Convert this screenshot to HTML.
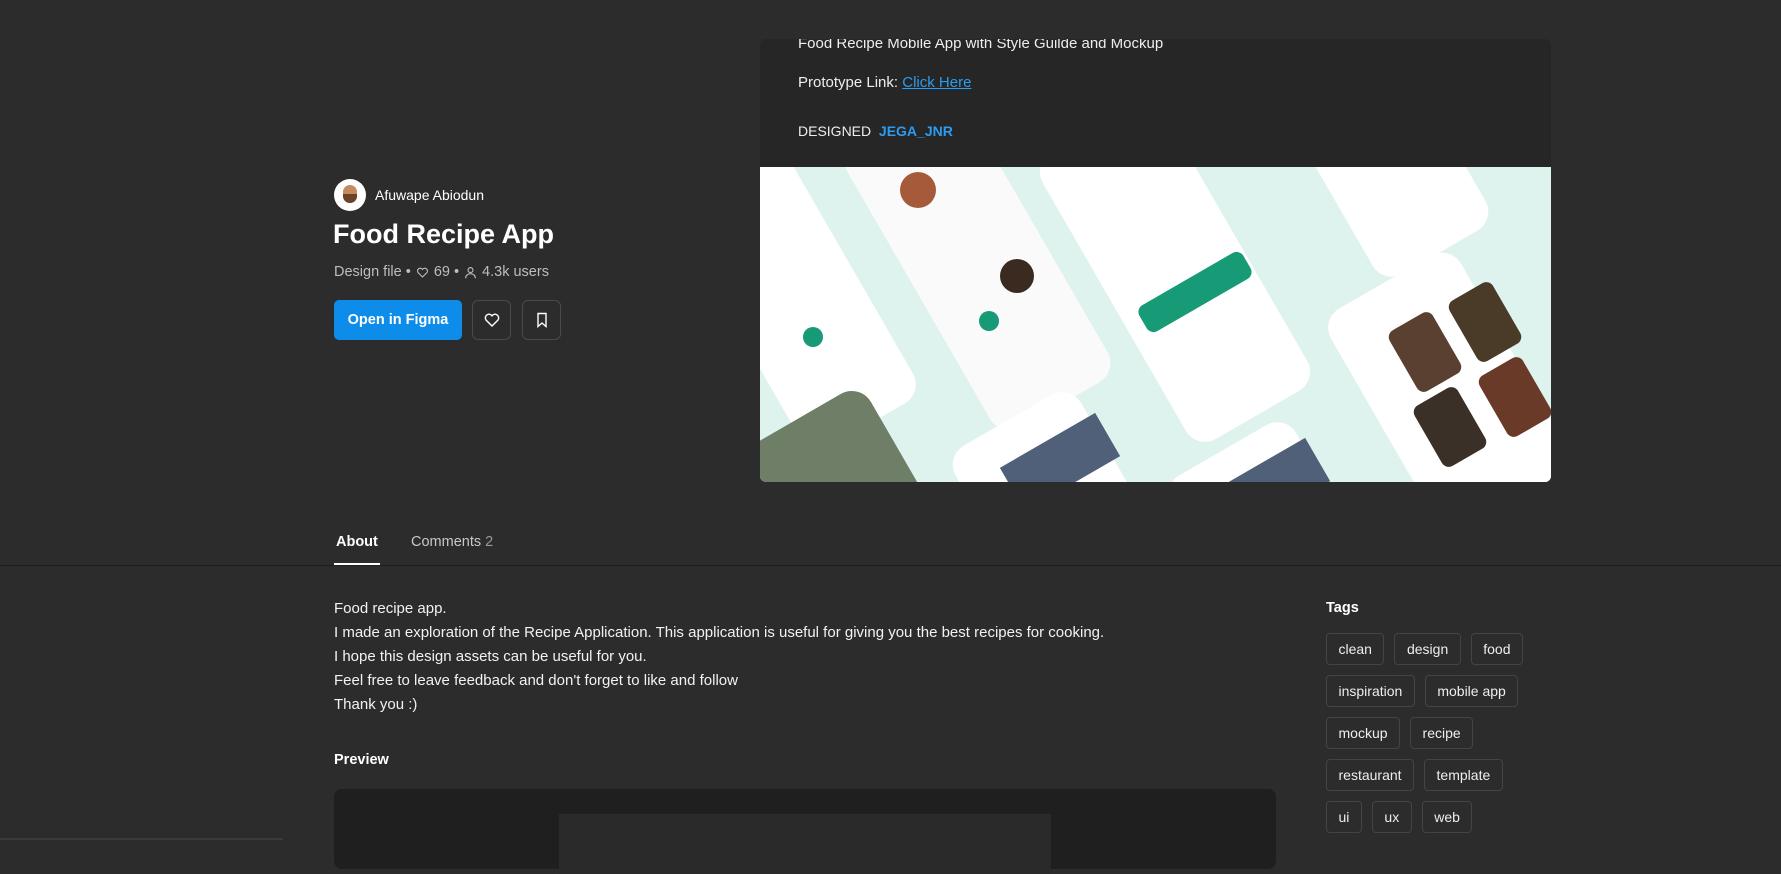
<!DOCTYPE html>
<html><head><meta charset="utf-8"><style>
*{margin:0;padding:0;box-sizing:border-box}
body{width:1781px;height:840px;background:#2c2c2c;font-family:"Liberation Sans",sans-serif;color:#fff;overflow:hidden;position:relative}
.a{position:absolute}
.btn{position:absolute;border:1px solid #4a4a4a;border-radius:6px;width:39px;height:40px;display:flex;align-items:center;justify-content:center}
.tag{display:inline-block;height:32px;line-height:30px;padding:0 11.5px;border:1px solid #444;border-radius:4px;font-size:14px;margin-right:10px;color:#eee}
.row{position:absolute;left:1326px;white-space:nowrap}
.body p{font-size:15px;line-height:24px;color:#f2f2f2}
.phone{position:absolute;background:#fff;border-radius:22px;transform:rotate(-30deg)}
</style></head><body>
<div class="a" style="left:334px;top:179px;width:32px;height:32px;border-radius:50%;background:#fff;overflow:hidden">
<div class="a" style="left:9px;top:6px;width:14px;height:18px;border-radius:7px;background:#c58a5e"></div>
<div class="a" style="left:9px;top:15px;width:14px;height:9px;border-radius:0 0 7px 7px;background:#6b4328"></div></div>
<div class="a" style="left:375px;top:187px;font-size:14px;color:#fff">Afuwape Abiodun</div>
<div class="a" style="left:333px;top:219px;font-size:27px;font-weight:bold">Food Recipe App</div>
<div class="a" style="left:334px;top:264px;font-size:14.5px;color:#bdbdbd;display:flex;align-items:center;gap:5px">Design file •
<svg width="13" height="13" viewBox="0 0 16 16"><path d="M8 13.5 2.5 8A3 3 0 0 1 8 4.2 3 3 0 0 1 13.5 8Z" fill="none" stroke="#bbb" stroke-width="1.4"/></svg> 69 •
<svg width="13" height="13" viewBox="0 0 16 16"><circle cx="8" cy="5" r="3" fill="none" stroke="#bbb" stroke-width="1.4"/><path d="M2 15c0-3.5 2.7-5.5 6-5.5s6 2 6 5.5" fill="none" stroke="#bbb" stroke-width="1.4"/></svg> 4.3k users</div>
<div class="a" style="left:334px;top:300px;width:128px;height:40px;background:#0d8ce9;border-radius:5px;font-size:14.5px;font-weight:bold;display:flex;align-items:center;justify-content:center">Open in Figma</div>
<div class="btn" style="left:472px;top:300px"><svg width="16" height="16" viewBox="0 0 16 16"><path d="M8 14 2 8A3.3 3.3 0 0 1 8 3.8 3.3 3.3 0 0 1 14 8Z" fill="none" stroke="#fff" stroke-width="1.4"/></svg></div>
<div class="btn" style="left:522px;top:300px"><svg width="14" height="16" viewBox="0 0 14 16"><path d="M3 1.5h8v13L7 11l-4 3.5Z" fill="none" stroke="#fff" stroke-width="1.4"/></svg></div>

<div class="a" style="left:760px;top:39px;width:791px;height:443px;border-radius:6px;overflow:hidden;background:#262626">
<div class="a" style="left:38px;top:-4px;font-size:15px;color:#eee">Food Recipe Mobile App with Style Guilde and Mockup</div>
<div class="a" style="left:38px;top:35px;font-size:15px;color:#eee">Prototype Link: <span style="color:#2c9cf0;text-decoration:underline">Click Here</span></div>
<div class="a" style="left:38px;top:84px;font-size:14px;color:#eee">DESIGNED &nbsp;<span style="color:#2c9cf0;font-weight:bold">JEGA_JNR</span></div>
<div class="a" style="left:0;top:128px;width:791px;height:315px;background:#dff3ee;overflow:hidden">
<div class="phone" style="left:-40px;top:-50px;width:130px;height:330px"></div>
<div class="phone" style="left:150px;top:-70px;width:135px;height:330px;background:#fafafa"></div>
<div class="phone" style="left:345px;top:-60px;width:140px;height:330px"></div>
<div class="phone" style="left:560px;top:-120px;width:130px;height:220px"></div>
<div class="phone" style="left:625px;top:95px;width:150px;height:300px"></div>
<div class="phone" style="left:10px;top:240px;width:150px;height:200px;background:#6f7f67"></div>
<div class="phone" style="left:225px;top:240px;width:145px;height:200px"></div>
<div class="phone" style="left:440px;top:270px;width:145px;height:200px"></div>
<div class="a" style="left:375px;top:110px;width:120px;height:30px;background:#179b77;border-radius:8px;transform:rotate(-30deg)"></div>
<div class="a" style="left:140px;top:5px;width:36px;height:36px;border-radius:50%;background:#a55a3a"></div>
<div class="a" style="left:240px;top:92px;width:34px;height:34px;border-radius:50%;background:#3a2a20"></div>
<div class="a" style="left:43px;top:160px;width:20px;height:20px;border-radius:50%;background:#179b77"></div>
<div class="a" style="left:219px;top:144px;width:20px;height:20px;border-radius:50%;background:#179b77"></div>
<div class="a" style="left:640px;top:150px;width:50px;height:70px;border-radius:8px;background:#5a4030;transform:rotate(-30deg)"></div>
<div class="a" style="left:700px;top:120px;width:50px;height:70px;border-radius:8px;background:#4a3a28;transform:rotate(-30deg)"></div>
<div class="a" style="left:665px;top:225px;width:50px;height:70px;border-radius:8px;background:#3a3028;transform:rotate(-30deg)"></div>
<div class="a" style="left:730px;top:195px;width:50px;height:70px;border-radius:8px;background:#6a3a28;transform:rotate(-30deg)"></div>
<div class="a" style="left:245px;top:270px;width:110px;height:50px;background:#4f6078;transform:rotate(-30deg)"></div>
<div class="a" style="left:455px;top:295px;width:110px;height:50px;background:#4f6078;transform:rotate(-30deg)"></div>
</div></div>

<div class="a" style="left:336px;top:534px;font-size:14.5px;font-weight:bold">About</div>
<div class="a" style="left:334px;top:563px;width:46px;height:2px;background:#fff"></div>
<div class="a" style="left:411px;top:534px;font-size:14.5px;color:#c8c8c8">Comments <span style="color:#999">2</span></div>
<div class="a" style="left:0;top:565px;width:1781px;height:1px;background:#1e1e1e"></div>

<div class="a body" style="left:334px;top:597px">
<p>Food recipe app.</p>
<p>I made an exploration of the Recipe Application. This application is useful for giving you the best recipes for cooking.</p>
<p>I hope this design assets can be useful for you.</p>
<p>Feel free to leave feedback and don't forget to like and follow</p>
<p>Thank you :)</p></div>
<div class="a" style="left:334px;top:752px;font-size:14.5px;font-weight:bold">Preview</div>
<div class="a" style="left:334px;top:789px;width:942px;height:80px;background:#1f1f1f;border-radius:8px">
<div class="a" style="left:225px;top:25px;width:492px;height:60px;background:#2a2a2a"></div></div>
<div class="a" style="left:0;top:838px;width:283px;height:2px;background:#3a3a3a"></div>

<div class="a" style="left:1326px;top:600px;font-size:14.5px;font-weight:bold">Tags</div>
<div class="row" style="top:633px"><span class="tag">clean</span><span class="tag">design</span><span class="tag">food</span></div>
<div class="row" style="top:675px"><span class="tag">inspiration</span><span class="tag">mobile app</span></div>
<div class="row" style="top:717px"><span class="tag">mockup</span><span class="tag">recipe</span></div>
<div class="row" style="top:759px"><span class="tag">restaurant</span><span class="tag">template</span></div>
<div class="row" style="top:801px"><span class="tag">ui</span><span class="tag">ux</span><span class="tag">web</span></div>
</body></html>
